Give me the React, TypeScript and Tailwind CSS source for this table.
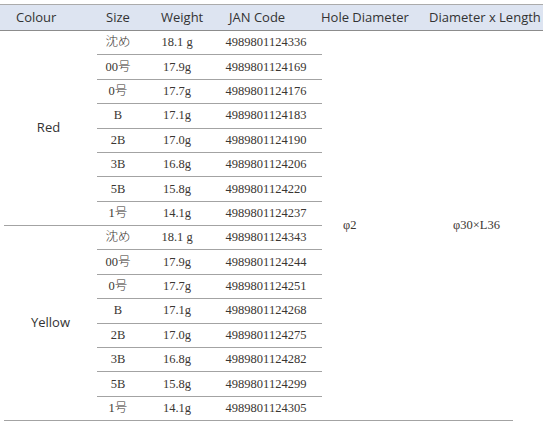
import React from "react";

type Row = { size: string; weight: string; jan: string };

const red: Row[] = [
  { size: "沈め", weight: "18.1 g", jan: "4989801124336" },
  { size: "00号", weight: "17.9g", jan: "4989801124169" },
  { size: "0号", weight: "17.7g", jan: "4989801124176" },
  { size: "B", weight: "17.1g", jan: "4989801124183" },
  { size: "2B", weight: "17.0g", jan: "4989801124190" },
  { size: "3B", weight: "16.8g", jan: "4989801124206" },
  { size: "5B", weight: "15.8g", jan: "4989801124220" },
  { size: "1号", weight: "14.1g", jan: "4989801124237" },
];

const yellow: Row[] = [
  { size: "沈め", weight: "18.1 g", jan: "4989801124343" },
  { size: "00号", weight: "17.9g", jan: "4989801124244" },
  { size: "0号", weight: "17.7g", jan: "4989801124251" },
  { size: "B", weight: "17.1g", jan: "4989801124268" },
  { size: "2B", weight: "17.0g", jan: "4989801124275" },
  { size: "3B", weight: "16.8g", jan: "4989801124282" },
  { size: "5B", weight: "15.8g", jan: "4989801124299" },
  { size: "1号", weight: "14.1g", jan: "4989801124305" },
];

const sans = "font-['Open_Sans','Noto_Sans_CJK_JP',sans-serif]";
const serif = "font-['Liberation_Serif','Noto_Sans_CJK_JP',serif]";

function Cells({ rows, start }: { rows: Row[]; start: number }) {
  return (
    <>
      {rows.map((r, i) => {
        const rowStart = start + i;
        const style = { gridRow: `${rowStart} / ${rowStart + 1}` };
        return (
          <React.Fragment key={r.jan}>
            <div
              style={{ ...style, gridColumn: "2 / 3" }}
              className="flex items-center justify-center border-b border-[#a3a3a3] font-light"
            >
              {r.size}
            </div>
            <div
              style={{ ...style, gridColumn: "3 / 4" }}
              className="flex items-center justify-center border-b border-[#a3a3a3]"
            >
              {r.weight}
            </div>
            <div
              style={{ ...style, gridColumn: "4 / 5" }}
              className="flex items-center justify-center border-b border-[#a3a3a3] pr-[5px]"
            >
              {r.jan}
            </div>
          </React.Fragment>
        );
      })}
    </>
  );
}

export default function App() {
  return (
    <div className="w-[543px] h-[428px] bg-white pt-[4px] overflow-hidden">
      {/* Header */}
      <div
        className={`flex h-[27px] items-center border-t border-b border-t-[#ababab] border-b-[#8c8c8c] bg-[#dde4f1] pt-[1px] text-[13px] text-[#333] ${sans}`}
      >
        <div className="w-[97px] pl-[16px]">Colour</div>
        <div className="w-[55px] pl-[9px]">Size</div>
        <div className="w-[68px] pl-[9px]">Weight</div>
        <div className="w-[92px] pl-[9px]">JAN Code</div>
        <div className="w-[108px] pl-[9px]">Hole Diameter</div>
        <div className="flex-1 pl-[9px] whitespace-nowrap">Diameter x Length</div>
      </div>

      {/* Body */}
      <div
        className={`grid grid-cols-[97px_42px_76px_107px_98px_123px] grid-rows-[repeat(16,24.375px)] text-[12.5px] text-[#3a3632] ${serif}`}
      >
        <div
          style={{ gridRow: "1 / 9", gridColumn: "1 / 2" }}
          className={`ml-[4px] flex items-center justify-center border-b border-[#a3a3a3] pr-[4px] text-[13px] text-[#333] ${sans}`}
        >
          Red
        </div>
        <div
          style={{ gridRow: "9 / 17", gridColumn: "1 / 2" }}
          className={`ml-[4px] flex items-center justify-center border-b border-[#a3a3a3] text-[13px] text-[#333] ${sans}`}
        >
          Yellow
        </div>
        <Cells rows={red} start={1} />
        <Cells rows={yellow} start={9} />
        <div
          style={{ gridRow: "1 / 17", gridColumn: "5 / 6" }}
          className="flex items-center border-b border-[#a3a3a3] pl-[21px]"
        >
          φ2
        </div>
        <div
          style={{ gridRow: "1 / 17", gridColumn: "6 / 7" }}
          className="flex flex-col"
        >
          <div className="flex flex-1 items-center pl-[33px]">φ30×L36</div>
          <div className="h-px w-[93px] bg-[#a3a3a3]" />
        </div>
      </div>
    </div>
  );
}
